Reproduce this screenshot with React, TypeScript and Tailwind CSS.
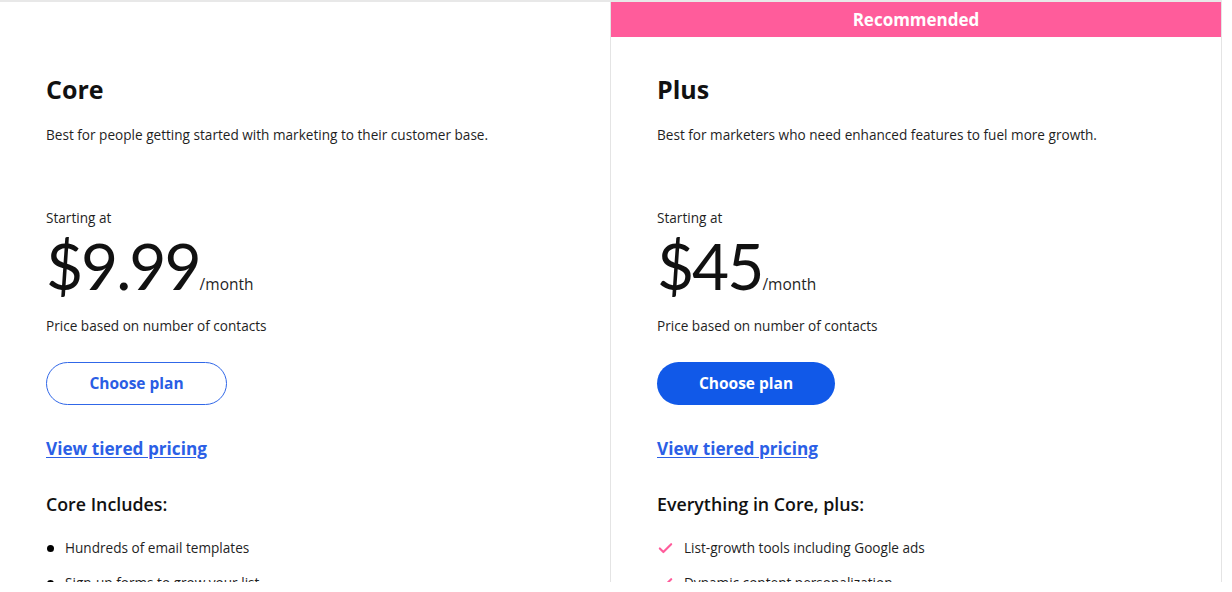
import React from 'react';
import { Check } from 'lucide-react';

type Plan = {
  name: string;
  description: string;
  price: string;
  recommended: boolean;
  includesTitle: string;
  features: string[];
};

const plans: Plan[] = [
  {
    name: 'Core',
    description: 'Best for people getting started with marketing to their customer base.',
    price: '$9.99',
    recommended: false,
    includesTitle: 'Core Includes:',
    features: ['Hundreds of email templates', 'Sign-up forms to grow your list'],
  },
  {
    name: 'Plus',
    description: 'Best for marketers who need enhanced features to fuel more growth.',
    price: '$45',
    recommended: true,
    includesTitle: 'Everything in Core, plus:',
    features: ['List-growth tools including Google ads', 'Dynamic content personalization'],
  },
];

const PlanCard: React.FC<{ plan: Plan }> = ({ plan }) => {
  return (
    <div
      className={`flex flex-col shrink-0 ${
        plan.recommended ? 'w-[612px] border-x border-[#e4e4e4]' : 'w-[610px]'
      }`}
    >
      {/* top band */}
      <div
        className={`h-[35px] shrink-0 flex items-center justify-center ${
          plan.recommended ? 'bg-[#ff5c9b]' : ''
        }`}
      >
        {plan.recommended && (
          <span className="text-white text-[17px] font-bold leading-none">Recommended</span>
        )}
      </div>

      <div className="pl-[46px] shrink-0">
        <h2 className="mt-[36px] text-[25px] leading-[32px] font-bold text-[#111]">{plan.name}</h2>
        <p className="mt-[20px] text-[13.6px] leading-[20px] text-[#1f1f1f]">{plan.description}</p>

        <p className="mt-[63px] text-[13.6px] leading-[20px] text-[#1f1f1f]">Starting at</p>
        <div className="mt-[6px] flex items-baseline">
          <span
            className="text-[64px] leading-[64px] tracking-[-2px] text-[#111]"
            style={{ fontFamily: 'Lato, sans-serif' }}
          >
            {plan.price}
          </span>
          <span className="text-[15.5px] text-[#1f1f1f]">/month</span>
        </div>
        <p className="mt-[18px] text-[13.6px] leading-[20px] text-[#1f1f1f]">
          Price based on number of contacts
        </p>

        <button
          className={`mt-[26px] h-[43px] rounded-full text-[15.5px] font-bold ${
            plan.recommended
              ? 'w-[178px] bg-[#1159e8] text-white'
              : 'w-[181px] border border-[#3067e8] text-[#2a5de4] bg-white'
          }`}
        >
          Choose plan
        </button>

        <div className="mt-[32px]">
          <a className="text-[17.2px] leading-[24px] font-bold text-[#2b5fe6] underline underline-offset-2 cursor-pointer">
            View tiered pricing
          </a>
        </div>

        <h3 className="mt-[31px] text-[17.8px] leading-[24px] font-semibold text-[#111]">
          {plan.includesTitle}
        </h3>

        <ul className="mt-[22px] flex flex-col gap-[15px]">
          {plan.features.map((f) => (
            <li key={f} className="flex items-center text-[13.6px] leading-[20px] text-[#1f1f1f]">
              {plan.recommended ? (
                <Check size={17} strokeWidth={3} className="text-[#ff5c9b] mr-[10px]" />
              ) : (
                <span className="w-[7px] h-[7px] rounded-full bg-black ml-[1px] mr-[11px]" />
              )}
              {f}
            </li>
          ))}
        </ul>
      </div>
    </div>
  );
};

export default function App() {
  return (
    <div className="w-[1232px] h-[592px] bg-white" style={{ fontFamily: '"Open Sans", "Noto Sans", sans-serif' }}>
      <div className="w-[1222px] h-[582px] overflow-hidden border-t-2 border-[#e8e8e8] flex">
        {plans.map((p) => (
          <PlanCard key={p.name} plan={p} />
        ))}
      </div>
    </div>
  );
}
